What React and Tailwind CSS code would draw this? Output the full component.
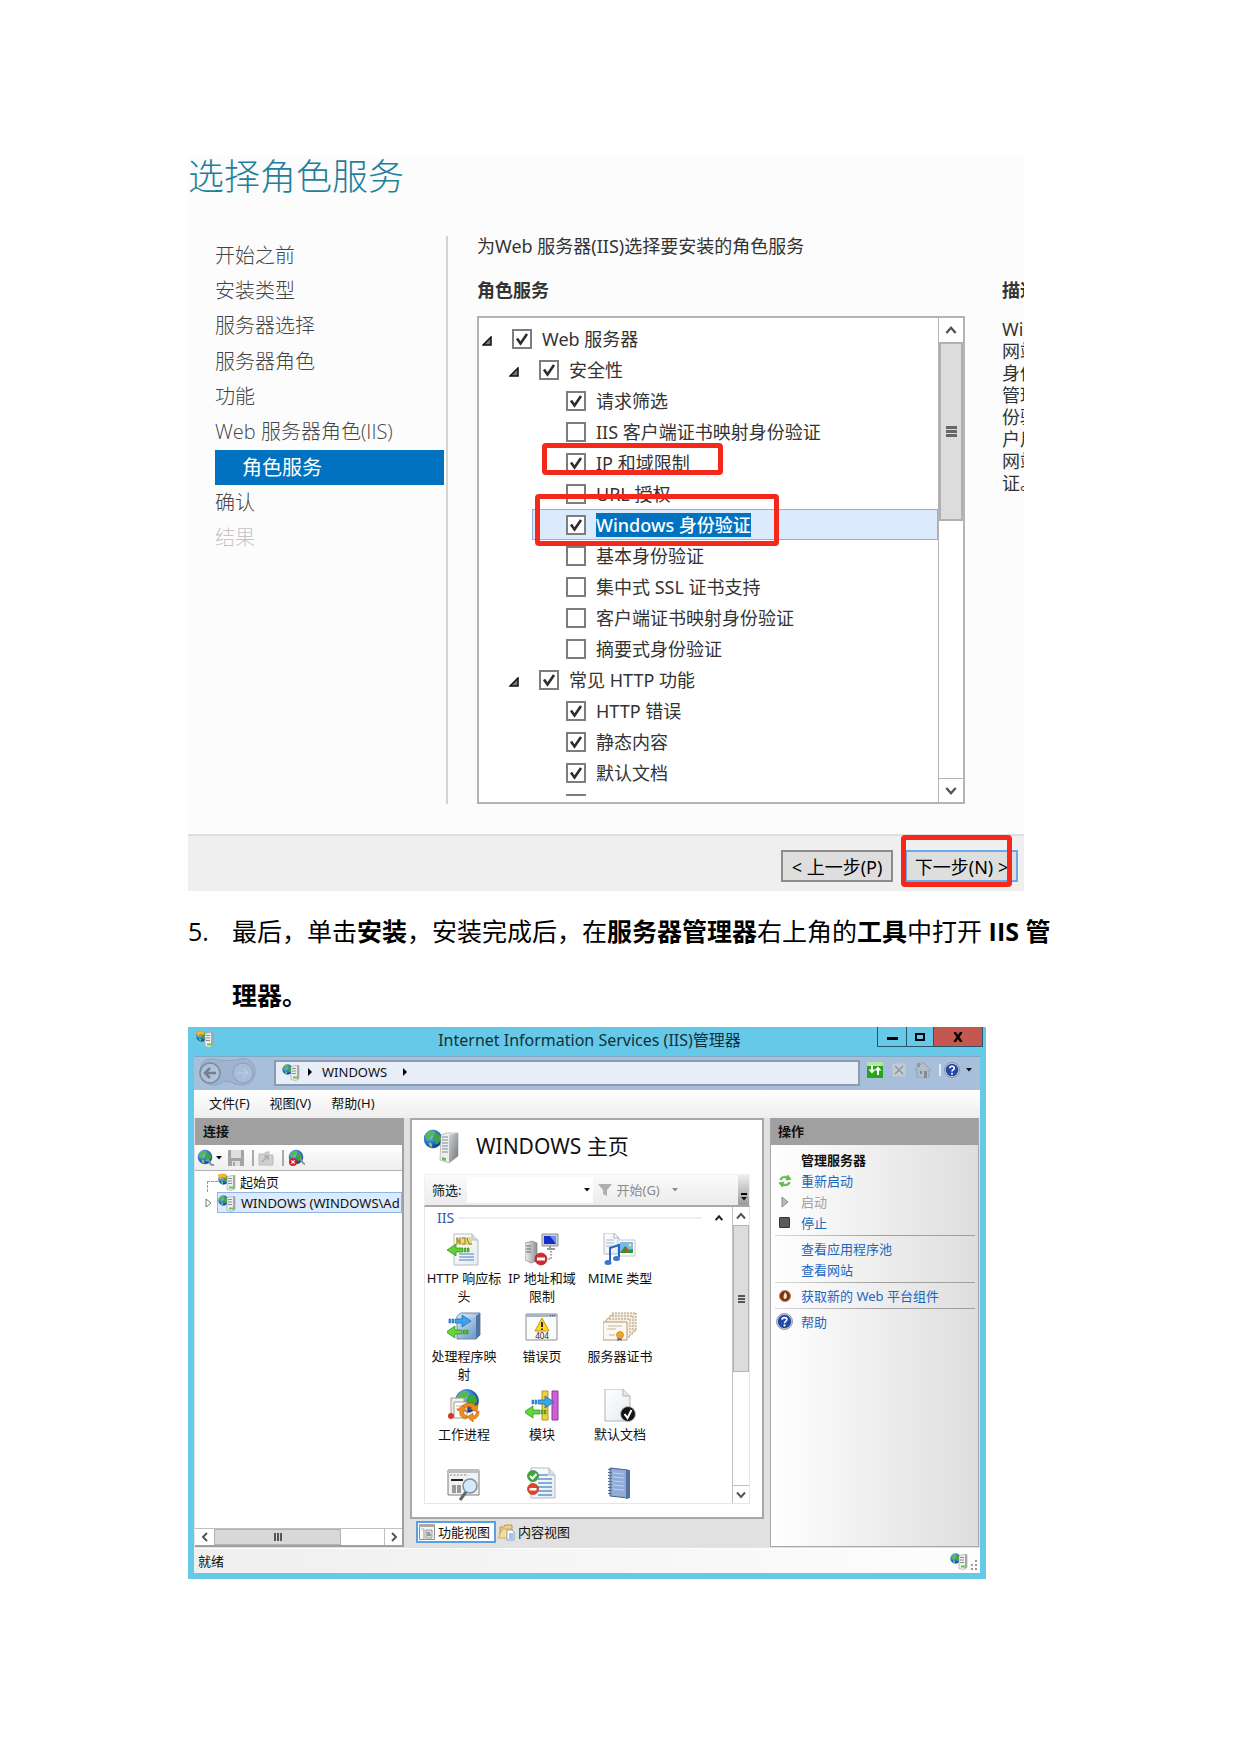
import React, { useState } from 'react';

const steps = [
  { name: '开始之前' },
  { name: '安装类型' },
  { name: '服务器选择' },
  { name: '服务器角色' },
  { name: '功能' },
  { name: 'Web 服务器角色(IIS)' },
  { name: '角色服务', active: true },
  { name: '确认' },
  { name: '结果', disabled: true },
];

const roles = [
  { name: 'Web 服务器', level: 0, checked: true, open: true },
  { name: '安全性', level: 1, checked: true, open: true },
  { name: '请求筛选', level: 2, checked: true },
  { name: 'IIS 客户端证书映射身份验证', level: 2 },
  { name: 'IP 和域限制', level: 2, checked: true, marked: true },
  { name: 'URL 授权', level: 2 },
  { name: 'Windows 身份验证', level: 2, checked: true, selected: true },
  { name: '基本身份验证', level: 2 },
  { name: '集中式 SSL 证书支持', level: 2 },
  { name: '客户端证书映射身份验证', level: 2 },
  { name: '摘要式身份验证', level: 2 },
  { name: '常见 HTTP 功能', level: 1, checked: true, open: true },
  { name: 'HTTP 错误', level: 2, checked: true },
  { name: '静态内容', level: 2, checked: true },
  { name: '默认文档', level: 2, checked: true },
  { name: '', level: 2 },
];

const indents = ['pl-[3px]', 'pl-[30px]', 'pl-[57px]'];

const description = ['Wi', '网站', '身份', '管理', '份验', '户用', '网站', '证。'];

function Chevron({ className, d }) {
  return (
    <svg viewBox="0 0 12 12" className={className} fill="none" stroke="#555" strokeWidth="2">
      <path d={d} />
    </svg>
  );
}

const UP = 'M2 8.5 6 4l4 4.5';
const DOWN = 'M2 3.5 6 8l4-4.5';
const LEFT = 'M8 2 4 6l4 4';
const RIGHT = 'M4 2l4 4-4 4';

function RoleRow({ role }) {
  const [checked, setChecked] = useState(!!role.checked);

  return (
    <li className={`relative h-[31px] ${indents[role.level]}`}>
      {role.selected && (
        <div className="absolute inset-y-0 left-[53px] right-0 border border-[#8fb0dc] bg-[#dceafd]" />
      )}
      <label className="relative flex h-full items-center">
        <span className="w-[30px] shrink-0">
          {role.open && (
            <svg viewBox="0 0 10 10" className="mt-1 size-[10px]">
              <path d="M9 1v8H1z" fill="#777" stroke="#111" strokeWidth="1.5" />
            </svg>
          )}
        </span>
        <span className="grid shrink-0">
          <input
            type="checkbox"
            checked={checked}
            onChange={(e) => setChecked(e.target.checked)}
            aria-label={role.name || undefined}
            className="col-start-1 row-start-1 size-5 appearance-none border-2 border-[#7d7d7d] bg-white"
          />
          {checked && (
            <svg viewBox="0 0 20 20" className="pointer-events-none col-start-1 row-start-1 size-5">
              <path d="M5 9.500l3.500 5L15 5" fill="none" stroke="#2d2d2d" strokeWidth="2.600" />
            </svg>
          )}
        </span>
        <span
          className={`ml-[10px] whitespace-nowrap leading-6 ${
            role.selected ? 'bg-[#0072c0] font-medium text-white' : ''
          }`}
        >
          {role.name}
        </span>
      </label>
      {role.marked && (
        <div className="absolute -top-1 left-[63px] z-10 h-8 w-[181px] rounded border-[5px] border-[#f5281c]" />
      )}
      {role.selected && (
        <div className="absolute -top-[15px] left-14 z-10 h-[52px] w-[244px] rounded border-[5px] border-[#f5281c]" />
      )}
    </li>
  );
}

function Wizard() {
  return (
    <section className="mr-9 bg-[#fcfcfc] text-[18px] text-[#333]">
      <h1 className="pt-px text-[36px] font-light leading-10 text-[#1f7f9c]">选择角色服务</h1>
      <div className="mt-[39px] flex pb-[30px]">
        <nav className="flex w-[260px] shrink-0 border-r-2 border-[#d4d4d4] pl-[27px] pr-[2px] font-['Open_Sans','Noto_Sans_CJK_SC',sans-serif] text-[20px] font-light text-[#444]">
          <ul className="mt-[2px] grid h-[318px] w-full grid-rows-9">
            {steps.map((step) => (
              <li
                key={step.name}
                className={`flex items-center whitespace-nowrap ${
                  step.active ? 'bg-[#0072c0] pl-[27px] font-normal text-white' : ''
                } ${step.disabled ? 'text-[#c4c4c4]' : ''}`}
              >
                {step.name}
              </li>
            ))}
          </ul>
        </nav>
        <div className="ml-[29px] min-w-0 flex-1">
          <p className="leading-5">为Web 服务器(IIS)选择要安装的角色服务</p>
          <h2 className="mt-6 font-bold leading-5">角色服务</h2>
          <div className="mt-4 flex h-[488px] border-2 border-[#b4b4b4] bg-white">
            <ul className="mt-[5px] h-[473px] flex-1 overflow-hidden">
              {roles.map((role, i) => (
                <RoleRow key={i} role={role} />
              ))}
            </ul>
            <div className="flex w-[25px] flex-col border-l border-[#b4b4b4] bg-white">
              <button type="button" aria-label="向上滚动" className="grid h-6 place-items-center">
                <Chevron d={UP} className="size-[14px]" />
              </button>
              <div className="flex h-[179px] flex-col items-center justify-center gap-px border-2 border-[#b0b0b0] bg-[#dcdcdc]">
                <span className="h-[3px] w-[11px] bg-[#666]" />
                <span className="h-[3px] w-[11px] bg-[#666]" />
                <span className="h-[3px] w-[11px] bg-[#666]" />
              </div>
              <button
                type="button"
                aria-label="向下滚动"
                className="mt-auto grid h-6 place-items-center border-t border-[#b4b4b4]"
              >
                <Chevron d={DOWN} className="size-[14px]" />
              </button>
            </div>
          </div>
        </div>
        <aside className="ml-[37px] w-[22px] shrink-0 overflow-hidden whitespace-nowrap pt-11">
          <h2 className="font-bold leading-5">描述</h2>
          <div className="mt-[18px] leading-[22px]">
            {description.map((line, i) => (
              <p key={i}>{line}</p>
            ))}
          </div>
        </aside>
      </div>
      <div className="flex h-[57px] items-start justify-end gap-3 border-t-2 border-[#dedede] bg-[#efefef] pr-[6px] pt-[14px] text-black">
        <button type="button" className="h-8 w-[112px] whitespace-nowrap border-2 border-[#8c8c8c] bg-[#dedede] text-[18px] leading-[30px]">
          &lt; 上一步(P)
        </button>
        <div className="relative">
          <button type="button" className="h-8 w-[113px] whitespace-nowrap border-2 border-[#6aaae8] bg-[#dedede] text-[18px] leading-[30px]">
            下一步(N) &gt;
          </button>
          <div className="absolute -left-1 -top-[15px] h-[52px] w-[111px] rounded border-[5px] border-[#f5281c]" />
        </div>
      </div>
    </section>
  );
}

function Gradients() {
  return (
    <svg className="absolute size-0" aria-hidden="true">
      <defs>
        <radialGradient id="sea" cx="35%" cy="30%" r="75%">
          <stop offset="0" stopColor="#9fd8ff" />
          <stop offset="0.5" stopColor="#2b7fd8" />
          <stop offset="1" stopColor="#0b2f86" />
        </radialGradient>
        <linearGradient id="steel" x1="0" x2="1">
          <stop offset="0" stopColor="#f2f2f2" />
          <stop offset="1" stopColor="#8b9096" />
        </linearGradient>
        <linearGradient id="side" x1="0" x2="1" y1="0" y2="1">
          <stop offset="0" stopColor="#d2d4d6" />
          <stop offset="1" stopColor="#6f7478" />
        </linearGradient>
        <linearGradient id="blueFace" x1="0" x2="1" y1="0" y2="1">
          <stop offset="0" stopColor="#dcecfa" />
          <stop offset="1" stopColor="#5d8fc4" />
        </linearGradient>
        <linearGradient id="paper" x1="0" x2="1" y1="0" y2="1">
          <stop offset="0" stopColor="#ffffff" />
          <stop offset="1" stopColor="#e6eaee" />
        </linearGradient>
      </defs>
    </svg>
  );
}

function Globe({ cx, cy, r }) {
  return (
    <g transform={`translate(${cx} ${cy}) scale(${r / 10})`}>
      <circle r="10" fill="url(#sea)" stroke="#2a5b9c" strokeWidth="0.600" />
      <path d="M-8-4C-6-8-2-9 1-8L0-4-3-2-4 2-7 1z" fill="#54b948" />
      <path d="M2-6 7-5 9 0 6 5 3 6 2 2-1 0z" fill="#3ea63a" />
      <path d="M-5 4-1 5-1 9-4 8z" fill="#7ed06a" />
    </g>
  );
}

function ServerIcon({ className, star }) {
  return (
    <svg viewBox="0 0 18 18" className={className}>
      <Globe cx={5.5} cy={6.5} r={5} />
      <path d="M9 3.500 14 2.500h3v13l-3 2-5-1z" fill="#eceeef" stroke="#9a9ea2" strokeWidth="0.600" />
      <path d="M15 3v14l2-1.500v-13z" fill="#a4a8ac" />
      <path d="M10 5.500h4M10 8h4M10 10.500h4" stroke="#8b8f93" />
      <path d="M11 13.500h4v2h-4z" fill="#63d02f" />
      {star && <path d="M0 2l4-1 3 0 2 2-2 2-3-1-2 3-1-3z" fill="#f6b52a" stroke="#d38a10" strokeWidth="0.400" />}
    </svg>
  );
}

function HelpIcon({ className }) {
  return (
    <svg viewBox="0 0 16 16" className={className}>
      <circle cx="8" cy="8" r="7.500" fill="#d0d5e0" stroke="#7d8598" strokeWidth="0.800" />
      <circle cx="8" cy="8" r="6.300" fill="#2448a8" />
      <path d="M5.800 6.300C5.800 3.600 10.200 3.700 10.200 6.200 10.200 8 8 7.800 8 9.600" fill="none" stroke="#fff" strokeWidth="1.600" />
      <circle cx="8" cy="11.700" r="1" fill="#fff" />
    </svg>
  );
}

function Arrow({ x, y, flip, color, stroke }) {
  return (
    <g transform={`translate(${x} ${y}) scale(${flip ? -1 : 1} 1)`} fill={color} stroke={stroke} strokeWidth="0.700">
      <path d="M-1 4h1.500v4H-1zM2 4h1.500v4H2zM5 4h7V0l9 6-9 6V8H5z" />
    </g>
  );
}

const featureIcons = {
  headers: (
    <>
      <path d="M7 1h18l6 6v25H7z" fill="url(#paper)" stroke="#b5bcc2" />
      <path d="M25 1v6h6" fill="#ddd" stroke="#b5bcc2" />
      <path d="M9 4h16v8H9z" fill="#e4d98b" />
      <path d="M10 11V5l3 6V5M15 5h3v6h-3M20 5l2 6h3" fill="none" stroke="#917f25" />
      <path d="M12 21h15M12 24h15M12 27h15" stroke="#7fa9d3" strokeWidth="1.500" />
      <Arrow x={21} y={11} flip color="#5fd035" stroke="#2c8a18" />
    </>
  ),
  ip: (
    <>
      <path d="M0 10 7 8l5 2v18l-6 2-6-3z" fill="url(#steel)" stroke="#777" strokeWidth="0.600" />
      <path d="M1 13h5M1 16h5M1 19h5" stroke="#666" />
      <path d="M17 1h16v12H17z" fill="#c9ced4" stroke="#8d9298" />
      <path d="M19 3h12v8H19z" fill="#1430c4" />
      <path d="M25 3h6v8z" fill="#6e8df0" />
      <path d="M22 16h8M25 13v3" stroke="#999" strokeWidth="2" />
      <path d="M26 18v8h-6" fill="none" stroke="#444" strokeDasharray="1.500 1.500" />
      <circle cx="16" cy="26" r="6" fill="#d12a2f" stroke="#9c1518" strokeWidth="0.600" />
      <path d="M12 24.500h8v3h-8z" fill="#fff" />
    </>
  ),
  mime: (
    <>
      <path d="M1 0h10l5 5v16H1z" fill="url(#paper)" stroke="#b5bcc2" />
      <path d="M11 0v5h5M3 7h8M3 10h8M3 13h6" fill="none" stroke="#9fb9d6" />
      <path d="M15 7h17v16H15z" fill="#fff" stroke="#c4c4c4" />
      <path d="M17 9h13v11H17z" fill="#79b7ee" />
      <path d="M17 20l5-7 4 4 4-1v4z" fill="#3c8f32" />
      <path d="M22 13l4 4-3 1z" fill="#d9482c" />
      <circle cx="27" cy="12" r="1.500" fill="#ffe14a" />
      <path d="M7 29V15l9-3v12" fill="none" stroke="#2c62c0" strokeWidth="2" />
      <ellipse cx="5" cy="29.500" rx="3.500" ry="2.500" fill="#3a74d2" />
      <ellipse cx="13.500" cy="25.500" rx="3.500" ry="2.500" fill="#3a74d2" />
    </>
  ),
  handler: (
    <>
      <path d="M10 5l4-3h19v22l-4 4H10z" fill="url(#blueFace)" stroke="#7389a1" />
      <path d="M29 5v23l4-4V2z" fill="#4f74a4" />
      <path d="M10 5h19" fill="none" stroke="#c5dbef" />
      <Arrow x={3} y={4} color="#3ba4ea" stroke="#1467b0" />
      <Arrow x={20} y={15} flip color="#66d33c" stroke="#2c8a18" />
    </>
  ),
  error: (
    <>
      <path d="M1 3h31v26H1z" fill="#fbfbfb" stroke="#8d8d8d" />
      <path d="M1 3h31v3H1z" fill="#a9b4c2" />
      <path d="M25 4.500h5" stroke="#445" strokeDasharray="1 1" />
      <path d="M17 7l7 13H10z" fill="#ffd52e" stroke="#c69a0c" strokeLinejoin="round" />
      <path d="M17 11v5M17 17.500v1.500" stroke="#222" strokeWidth="1.800" />
      <text x="17" y="28" fontSize="8" textAnchor="middle" fill="#222">404</text>
    </>
  ),
  cert: (
    <>
      <path d="M9 2h24v18H9z" fill="#f3e9d8" stroke="#b09a78" strokeDasharray="2 1" />
      <path d="M6 5h24v18H6z" fill="#f5ecdd" stroke="#b09a78" strokeDasharray="2 1" />
      <path d="M3 8h24v18H3z" fill="#f7efe2" stroke="#b09a78" strokeDasharray="2 1" />
      <path d="M0 11h24v18H0z" fill="#fdf8ef" stroke="#b09a78" />
      <path d="M5 15h14M4 18h9M6 24h6" stroke="#c0b6a4" />
      <path d="M15 25l-1 5 3-1 2 1-1-5z" fill="#2f6fd0" />
      <circle cx="17" cy="24" r="3.500" fill="#f1a82a" stroke="#b8760e" strokeWidth="0.600" />
    </>
  ),
  worker: (
    <>
      <Globe cx={20} cy={12} r={11.5} />
      <path d="M4 9h13v17H4z" fill="#f6f1e6" stroke="#a49c8a" />
      <path d="M7 13h13v16H7z" fill="#fff" stroke="#a49c8a" />
      <path d="M9 17h8M9 20h7" stroke="#bbb" />
      <circle cx="4" cy="27" r="3" fill="#d23a28" />
      <path d="M15 17C20 12 27 14 28 17l3-2-1 8-7-3 2-1c-2-2-5-2-7 0z" fill="#f28b1f" stroke="#b85c0a" strokeWidth="0.600" />
      <path d="M32 22c0 6-3 8-6 8v3l-6-5 6-4v3c2 0 3-2 4-4z" fill="#f28b1f" stroke="#b85c0a" strokeWidth="0.600" />
      <path d="M19 30c-5-1-7-4-6-8l-3-1 6-5 4 7-3-1c-1 3 1 4 3 5z" fill="#f28b1f" stroke="#b85c0a" strokeWidth="0.600" />
    </>
  ),
  modules: (
    <>
      <path d="M17 2h6v29h-6z" fill="#f3cf3f" stroke="#b8951d" />
      <path d="M27 2h6v29h-6z" fill="#cf5fd4" stroke="#93379a" />
      <Arrow x={8} y={7} color="#3ba4ea" stroke="#1467b0" />
      <Arrow x={20} y={17} flip color="#66d33c" stroke="#2c8a18" />
    </>
  ),
  doc: (
    <>
      <path d="M2 0h18l7 7v25H2z" fill="url(#paper)" stroke="#b3b3b3" />
      <path d="M20 0v7h7" fill="#e8e8e8" stroke="#b3b3b3" />
      <circle cx="25" cy="25" r="7.500" fill="#141414" stroke="#bbb" />
      <path d="M21.500 25l3 4 4-8" fill="none" stroke="#fff" strokeWidth="2" />
    </>
  ),
  browse: (
    <>
      <path d="M1 3h31v25H1z" fill="#f2f2f2" stroke="#7d7d7d" />
      <path d="M1 3h31v3H1z" fill="#b9bec4" />
      <path d="M3 8h18" stroke="#888" strokeDasharray="2 1.500" />
      <path d="M4 13h12" stroke="#222" strokeWidth="2" />
      <path d="M5 18h4v8H5zM10 18h4v8h-4z" fill="#999" />
      <path d="M19 25l-6 8" stroke="#666" strokeWidth="3" />
      <circle cx="23" cy="19" r="7" fill="#d4e9fb" stroke="#7f8ea0" strokeWidth="1.500" />
    </>
  ),
  rules: (
    <>
      <path d="M6 1h18l6 7v23H6z" fill="url(#paper)" stroke="#b5bcc2" />
      <path d="M24 1v7h6" fill="#ddd" stroke="#b5bcc2" />
      <path d="M13 8h10M13 12h14M13 16h14M13 20h14M13 24h14M13 28h14" stroke="#5d96cf" strokeWidth="1.500" />
      <circle cx="8" cy="9" r="5.500" fill="#3fa63b" stroke="#257523" strokeWidth="0.600" />
      <path d="M5 9l2.500 2.500L11.500 7" fill="none" stroke="#fff" strokeWidth="2" />
      <circle cx="8" cy="22" r="5.500" fill="#df4526" stroke="#9b2510" strokeWidth="0.600" />
      <path d="M4.500 21h7v2.500h-7z" fill="#fff" />
    </>
  ),
  log: (
    <>
      <path d="M7 1l18 2v28l-18-2z" fill="#8fadd6" stroke="#48608c" />
      <path d="M23 3l4 0v28l-4 1z" fill="#54719f" />
      <path d="M10 6l11 1M10 10l11 1M10 14l11 1M10 18l11 1M10 22l11 1" stroke="#c2d5ee" />
      <path d="M7 2v27" stroke="#5a6f94" strokeWidth="4" strokeDasharray="1 2" />
    </>
  ),
};

const features = [
  { icon: 'headers', name: 'HTTP 响应标头' },
  { icon: 'ip', name: 'IP 地址和域限制' },
  { icon: 'mime', name: 'MIME 类型' },
  { icon: 'handler', name: '处理程序映射' },
  { icon: 'error', name: '错误页' },
  { icon: 'cert', name: '服务器证书' },
  { icon: 'worker', name: '工作进程' },
  { icon: 'modules', name: '模块' },
  { icon: 'doc', name: '默认文档' },
  { icon: 'browse', name: '' },
  { icon: 'rules', name: '' },
  { icon: 'log', name: '' },
];

function Caret({ className }) {
  return (
    <svg viewBox="0 0 6 4" className={className}>
      <path d="M0 0h6L3 3.500z" fill="currentColor" />
    </svg>
  );
}

function TitleBar() {
  return (
    <div className="grid h-[29px] grid-cols-[1fr_auto_1fr] pl-2 pr-[3px] text-[#12303b]">
      <ServerIcon star className="mt-[3px] size-[18px]" />
      <h2 className="text-[16px] leading-[26px]">Internet Information Services (IIS)管理器</h2>
      <div className="flex h-5 justify-self-end border border-t-0 border-[#27556a]">
        <button type="button" aria-label="最小化" className="grid w-7 place-items-center">
          <span className="mt-1 h-[3px] w-[11px] bg-black" />
        </button>
        <button type="button" aria-label="最大化" className="grid w-7 place-items-center border-x border-[#27556a]">
          <span className="h-2 w-[10px] border-2 border-black" />
        </button>
        <button type="button" aria-label="关闭" className="grid w-12 place-items-center bg-[#c4574f]">
          <svg viewBox="0 0 10 10" className="size-[10px]">
            <path d="M1.500 0l7 10M8.500 0l-7 10" stroke="#000" strokeWidth="2.400" />
          </svg>
        </button>
      </div>
    </div>
  );
}

function AddressBar() {
  return (
    <div className="flex h-[34px] items-start border-t border-[#7fa9c2] bg-[#a7bfdb]">
      <svg viewBox="0 0 60 28" className="ml-1 mt-px h-7 w-[60px] shrink-0" fill="none">
        <path d="M2 14C2 3 9 0 16 1c6 2 20 2 26 0 8-2 15 3 15 13s-7 13-15 13c-6 0-8-4-13-4s-7 4-13 4S2 24 2 14z" fill="#9fb4cf" stroke="#8fa3bf" />
        <circle cx="12" cy="15" r="10" fill="#afc2da" stroke="#7d8b9f" strokeWidth="1.500" />
        <path d="M18 15H8m4-5-5 5 5 5" stroke="#74808f" strokeWidth="2.500" />
        <circle cx="45" cy="15" r="10" fill="#a9bdd8" stroke="#8f9db2" />
        <path d="M39 15h10m-4-5 5 5-5 5" stroke="#b9c9df" strokeWidth="1.500" />
      </svg>
      <div className="ml-4 mt-[3px] flex h-[26px] flex-1 items-center border-2 border-[#8c9bae] bg-[#e7eef7] pb-[2px] pl-[6px] text-[13px]">
        <ServerIcon className="size-[18px]" />
        <svg viewBox="0 0 4 8" className="ml-2 h-2 w-1">
          <path d="M0 0l4 4-4 4z" />
        </svg>
        <span className="ml-[10px]">WINDOWS</span>
        <svg viewBox="0 0 4 8" className="ml-4 h-2 w-1">
          <path d="M0 0l4 4-4 4z" />
        </svg>
      </div>
      <div className="ml-[7px] mt-[5px] flex items-center">
        <svg viewBox="0 0 16 16" className="size-4">
          <path d="M0 0h16v16H0z" fill="#27a51f" />
          <path d="M0 0h16v4H0z" fill="#b5e6a2" />
          <path d="M5 3v6M11 13V8" stroke="#fff" strokeWidth="2" />
          <path d="M1.500 7.500h7L5 11.500zM7.500 8.500h7L11 4.500z" fill="#fff" />
        </svg>
        <svg viewBox="0 0 16 16" className="ml-2 size-4">
          <path d="M1 1h14v14H1z" fill="#c3cbd5" stroke="#b2bcc9" />
          <path d="M4 4l8 8M12 4l-8 8" stroke="#8e98a4" strokeWidth="1.500" />
        </svg>
        <svg viewBox="0 0 16 16" className="ml-2 size-4">
          <path d="M0 8 8 0l8 8h-2v8H2V8z" fill="#b4bcc7" stroke="#98a1ad" />
          <path d="M2 1h3v4H2z" fill="#8e98a4" />
          <path d="M5 9h2v3H5zM9 9h3v7H9z" fill="#808b98" />
        </svg>
        <span className="ml-2 h-3 w-[2px] bg-[#e4ebf3]" />
        <HelpIcon className="ml-[3px] size-4" />
        <Caret className="ml-[6px] mr-2 h-1 w-[6px]" />
      </div>
    </div>
  );
}

function Connections() {
  return (
    <aside className="flex w-[209px] shrink-0 flex-col border-b-2 border-r-2 border-[#a0a0a0] bg-white">
      <h3 className="h-[27px] shrink-0 bg-[#a0a0a0] pl-2 font-bold leading-[27px]">连接</h3>
      <div className="flex h-[26px] shrink-0 items-center border-b border-[#b0b0b0] bg-gradient-to-b from-white to-[#eeeeee] pl-[2px]">
        <svg viewBox="0 0 18 18" className="size-[18px]">
          <Globe cx={8} cy={8} r={7} />
          <path d="M9 12c2-2 4 0 4 2s2 2 4 2" fill="none" stroke="#7c98ad" strokeWidth="2" />
        </svg>
        <Caret className="ml-px h-1 w-[6px]" />
        <svg viewBox="0 0 16 16" className="ml-[6px] size-4">
          <path d="M0 0h16v16H0z" fill="#a4a4a4" />
          <path d="M3 0h10v8H3zM4 11h8v5H4z" fill="#dedede" />
          <path d="M5 12h2v4H5z" fill="#a4a4a4" />
        </svg>
        <span className="ml-2 h-4 w-[2px] bg-[#aaa]" />
        <svg viewBox="0 0 16 16" className="ml-1 size-4">
          <path d="M1 4h5l2-2h3v3h4v10H1z" fill="#cfcfcf" stroke="#bdbdbd" />
          <path d="M4 12l5-5M6 6h4v4" fill="none" stroke="#aaa" strokeWidth="1.500" />
        </svg>
        <span className="ml-2 h-4 w-[2px] bg-[#aaa]" />
        <svg viewBox="0 0 18 18" className="ml-1 size-[18px]">
          <Globe cx={8} cy={8} r={7} />
          <path d="M12 10c2 1 2 5 5 5" fill="none" stroke="#7c98ad" strokeWidth="2" />
          <circle cx="5" cy="13" r="4" fill="#cf2227" />
          <path d="M3.300 11.300l3.400 3.400M6.700 11.300l-3.400 3.400" stroke="#fff" strokeWidth="1.200" />
        </svg>
      </div>
      <ul className="flex-1 overflow-hidden whitespace-nowrap">
        <li className="flex h-[21px] items-center">
          <span className="ml-3 mt-[10px] h-[11px] w-[11px] border-l border-t border-dashed border-[#999]" />
          <ServerIcon star className="mr-1 size-[18px]" />
          起始页
        </li>
        <li className="flex h-[21px] items-center">
          <svg viewBox="0 0 8 10" className="ml-[10px] h-[10px] w-2 shrink-0">
            <path d="M1 1l5 4-5 4z" fill="#fff" stroke="#777" />
          </svg>
          <span className="w-1 shrink-0" />
          <span className="flex h-full flex-1 items-center border border-[#8fb3e4] bg-[#dceafd]">
            <ServerIcon className="mr-[5px] size-[18px] shrink-0" />
            WINDOWS (WINDOWS\Ad
          </span>
        </li>
      </ul>
      <div className="flex h-[17px] shrink-0 border-t border-[#c0c0c0]">
        <button type="button" aria-label="向左滚动" className="grid w-[19px] place-items-center">
          <Chevron d={LEFT} className="size-3" />
        </button>
        <div className="flex w-[127px] items-center justify-center gap-px border border-[#b4b4b4] bg-[#d8d8d8]">
          <span className="h-2 w-[2px] bg-[#555]" />
          <span className="h-2 w-[2px] bg-[#555]" />
          <span className="h-2 w-[2px] bg-[#555]" />
        </div>
        <button
          type="button"
          aria-label="向右滚动"
          className="ml-auto grid w-[18px] place-items-center border-l border-[#c0c0c0]"
        >
          <Chevron d={RIGHT} className="size-3" />
        </button>
      </div>
    </aside>
  );
}

function Home() {
  const [filter, setFilter] = useState('');

  return (
    <div className="flex min-w-0 flex-1 flex-col">
      <div className="flex h-[401px] flex-col border-2 border-[#a8a8a8] bg-white px-3 pb-[13px]">
        <div className="flex h-[54px] items-center pb-[2px]">
          <svg viewBox="0 0 36 36" className="size-9">
            <Globe cx={9} cy={11} r={9} />
            <path d="M17 7l5-2h12v23l-9 7-9-3z" fill="#eceded" stroke="#9a9ea2" strokeWidth="0.600" />
            <path d="M25 7l9-2v23l-9 7z" fill="url(#side)" />
            <path d="M18 9h6M18 12h6M18 15h6M18 18h6M18 21h6M18 24h6" stroke="#85898c" />
            <path d="M18 29l4 1v3l-4-1z" fill="#6fc04a" />
          </svg>
          <h3 className="ml-4 text-[21px]">WINDOWS 主页</h3>
        </div>
        <div className="flex h-[33px] shrink-0 items-center border border-b-2 border-[#f0f0f0] border-b-[#a8a8a8] bg-gradient-to-b from-[#fafafa] to-[#ececec] pl-[7px]">
          <label htmlFor="filter">筛选:</label>
          <input
            id="filter"
            type="text"
            value={filter}
            onChange={(e) => setFilter(e.target.value)}
            className="ml-[6px] h-[26px] w-[114px] bg-white px-1"
          />
          <span className="grid h-[26px] w-3 place-items-center bg-white">
            <Caret className="h-1 w-[6px]" />
          </span>
          <svg viewBox="0 0 14 14" className="ml-[5px] size-[14px]">
            <path d="M0 1h14L9 7v6l-4-2V7z" fill="#b0b0b0" />
          </svg>
          <button type="button" className="ml-1 flex items-center text-[13px] text-[#8a8a8a]">
            开始(G)
            <Caret className="ml-3 h-1 w-[6px]" />
          </button>
          <span className="ml-auto flex h-full w-[11px] flex-col items-center justify-end gap-[2px] bg-gradient-to-b from-[#eeeeee] to-[#9c9c9c] pb-1">
            <span className="h-[2px] w-[6px] bg-black" />
            <Caret className="h-1 w-[6px]" />
          </span>
        </div>
        <div className="flex min-h-0 flex-1 border border-t-0 border-[#e6e6e6]">
          <div className="flex-1 overflow-hidden">
            <div className="flex h-[26px] items-center pb-1 pl-3 pr-2 text-[14px] text-[#2f55a4]">
              IIS
              <span className="ml-1 mr-3 h-[2px] flex-1 bg-[#e8f0f8]" />
              <svg viewBox="0 0 12 12" className="size-[10px]" fill="none" stroke="#222" strokeWidth="2.500">
                <path d={UP} />
              </svg>
            </div>
            <ul className="grid grid-cols-[repeat(auto-fill,78px)]">
              {features.map((f) => (
                <li key={f.icon} className="h-[78px] px-px text-center leading-[18px]">
                  <svg viewBox="0 0 34 34" className="mx-auto mb-[2px] size-[34px]">
                    {featureIcons[f.icon]}
                  </svg>
                  {f.name}
                </li>
              ))}
            </ul>
          </div>
          <div className="flex w-[17px] flex-col border-l border-[#c0c0c0]">
            <button type="button" aria-label="向上滚动" className="grid h-[18px] place-items-center">
              <Chevron d={UP} className="size-3" />
            </button>
            <div className="flex h-[147px] flex-col items-center justify-center gap-px border border-[#b4b4b4] bg-[#dcdcdc]">
              <span className="h-[2px] w-[7px] bg-[#555]" />
              <span className="h-[2px] w-[7px] bg-[#555]" />
              <span className="h-[2px] w-[7px] bg-[#555]" />
            </div>
            <button
              type="button"
              aria-label="向下滚动"
              className="mt-auto grid h-[18px] place-items-center border-t border-[#c0c0c0]"
            >
              <Chevron d={DOWN} className="size-3" />
            </button>
          </div>
        </div>
      </div>
      <div className="ml-[6px] mt-[2px] flex items-center">
        <button type="button" className="flex h-[22px] items-center gap-[3px] border-2 border-[#5b9fe0] bg-white px-px pr-1">
          <svg viewBox="0 0 16 16" className="size-4">
            <path d="M0.500 0.500h15v15h-15z" fill="#f7f7f7" stroke="#8f8f8f" />
            <path d="M0 0h16v3H0z" fill="#a8a8a8" />
            <path d="M2 5h3v10M5 5v10" fill="none" stroke="#b5b5b5" />
            <path d="M7 6h6v8H7z" fill="#ddd" stroke="#999" />
            <path d="M8 9h3M8 11h4" stroke="#555" />
          </svg>
          功能视图
        </button>
        <button type="button" className="flex items-center gap-[3px] pl-[2px]">
          <svg viewBox="0 0 17 17" className="size-[17px]">
            <path d="M2 3h4l1-2h7v12H2z" fill="#ecd08a" stroke="#b99a4c" />
            <path d="M0 14 4 5h9l-3 9z" fill="#f3dc98" stroke="#b99a4c" strokeWidth="0.700" />
            <path d="M9 6h5l2 2v8H9z" fill="#fff" stroke="#8aa0bb" />
            <path d="M11 10h4M11 12h4M11 14h4" stroke="#4b86cf" />
          </svg>
          内容视图
        </button>
      </div>
    </div>
  );
}

function Action({ icon, children }) {
  return (
    <a href="#" className="flex h-[21px] items-center text-[#1c66bd]">
      <span className="grid w-[30px] shrink-0 place-items-center pr-[3px]">{icon}</span>
      {children}
    </a>
  );
}

function Rule() {
  return <div className="my-[2px] ml-1 mr-[3px] h-px bg-gradient-to-r from-[#dddddd] via-[#a0a0a0] to-[#a0a0a0]" />;
}

function Actions() {
  return (
    <aside className="w-[209px] shrink-0 border border-t-0 border-[#a8a8a8] bg-gradient-to-r from-white to-[#dedede]">
      <h3 className="h-[27px] bg-[#a0a0a0] pl-[7px] font-bold leading-[27px]">操作</h3>
      <div className="pt-1">
        <p className="flex h-[21px] items-center pl-[30px] font-bold">管理服务器</p>
        <Action
          icon={
            <svg viewBox="0 0 16 16" className="size-[14px]" fill="#5fbf45" stroke="#3c9a2a" strokeWidth="0.500">
              <path d="M2 6C4 2 8 2 10 3l1-2 4 5-6 1 1-2C7 4 5 4 4 7z" />
              <path d="M14 10c-2 4-6 4-8 3l-1 2-4-5 6-1-1 2c3 1 5 1 6-2z" />
            </svg>
          }
        >
          重新启动
        </Action>
        <p className="flex h-[21px] items-center text-[#a0a0a0]">
          <span className="grid w-[30px] place-items-center pr-[3px]">
            <svg viewBox="0 0 8 12" className="h-3 w-2">
              <path d="M1 1l6 5-6 5z" fill="#b8b8b8" stroke="#8d8d8d" />
            </svg>
          </span>
          启动
        </p>
        <Action icon={<span className="size-[11px] rounded-[1px] border border-[#333] bg-[#5a5a5a]" />}>停止</Action>
        <Rule />
        <Action>查看应用程序池</Action>
        <Action>查看网站</Action>
        <Rule />
        <Action
          icon={
            <svg viewBox="0 0 12 12" className="size-3">
              <circle cx="6" cy="6" r="5.500" fill="#7a3510" stroke="#b8805c" />
              <path d="M6 2C9 5 8 9 6 9S4 6 6 2z" fill="#fbe3cf" />
            </svg>
          }
        >
          获取新的 Web 平台组件
        </Action>
        <Rule />
        <Action icon={<HelpIcon className="size-[17px]" />}>帮助</Action>
      </div>
    </aside>
  );
}

function IisManager() {
  return (
    <section className="mr-[74px] bg-[#66c9e8] pb-[6px] text-[13px] leading-[18px] text-[#111]">
      <TitleBar />
      <div className="mx-[6px]">
        <AddressBar />
        <nav className="flex h-7 items-center gap-5 bg-gradient-to-b from-white to-[#eeeeee] pb-[3px] pl-[15px]">
          <a href="#">文件(F)</a>
          <a href="#">视图(V)</a>
          <a href="#">帮助(H)</a>
        </nav>
        <div className="flex h-[430px] gap-[6px] bg-[#e1e1e1] px-px pb-px">
          <Connections />
          <Home />
          <Actions />
        </div>
        <footer className="flex h-[25px] items-center justify-between border-t border-white bg-gradient-to-r from-[#efefef] to-[#fdfdfd] pl-1 pr-[2px]">
          就绪
          <span className="flex items-end">
            <ServerIcon className="size-[18px]" />
            <svg viewBox="0 0 10 10" className="size-[10px]" fill="#999">
              <path d="M7 0h2v2H7zM3 4h2v2H3zM7 4h2v2H7zM3 8h2v2H3zM7 8h2v2H7z" />
            </svg>
          </span>
        </footer>
      </div>
    </section>
  );
}

export default function App() {
  return (
    <main className="min-h-screen bg-white pb-[174px] pl-[188px] pr-[180px] pt-[156px] font-['Noto_Sans','Noto_Sans_CJK_SC',sans-serif]">
      <Gradients />
      <Wizard />
      <ol
        start={5}
        className="mt-2 font-['Open_Sans','Noto_Sans_CJK_SC',sans-serif] text-[25px] leading-16 text-black"
      >
        <li className="flex">
          <span className="w-11 shrink-0">5.</span>
          <p>
            最后，单击<b>安装</b>，安装完成后，在<b>服务器管理器</b>右上角的<b>工具</b>中打开<b> IIS 管理器。</b>
          </p>
        </li>
      </ol>
      <IisManager />
    </main>
  );
}
